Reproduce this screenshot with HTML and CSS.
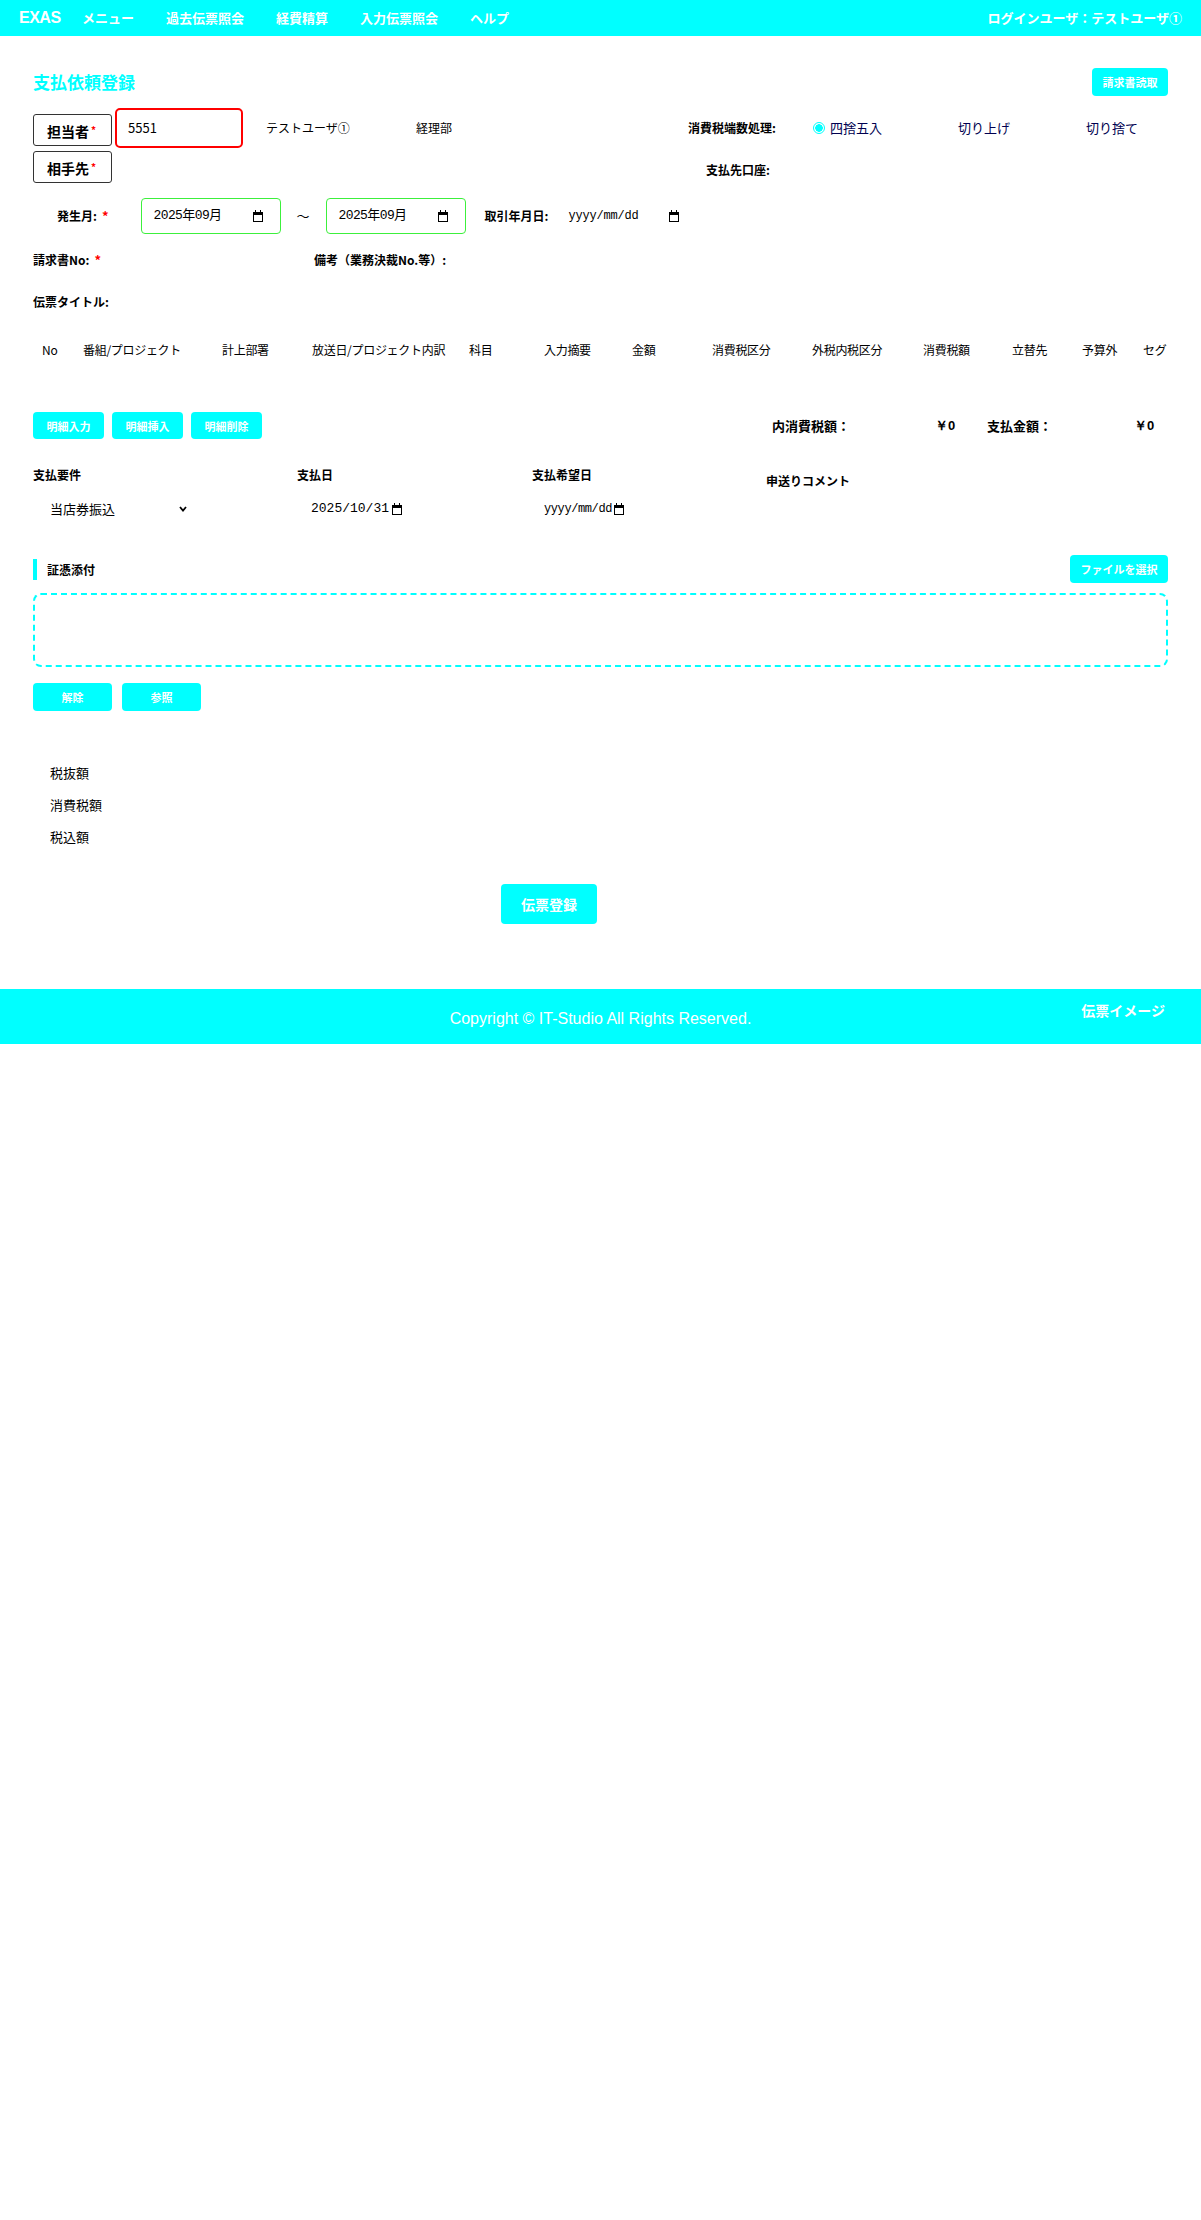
FILE: index.html
```html
<!DOCTYPE html>
<html lang="ja">
<head>
<meta charset="utf-8">
<title>支払依頼登録</title>
<link rel="stylesheet" href="styles.css">
</head>
<body>
<header class="topbar">
  <div class="brand">EXAS</div>
  <nav class="nav">
    <span class="nav-item">メニュー</span>
    <span class="nav-item">過去伝票照会</span>
    <span class="nav-item">経費精算</span>
    <span class="nav-item">入力伝票照会</span>
    <span class="nav-item">ヘルプ</span>
  </nav>
  <div class="login">ログインユーザ：テストユーザ①</div>
</header>

<main class="main">
  <div class="title-row">
    <h1 class="page-title">支払依頼登録</h1>
    <button class="btn btn-read">請求書読取</button>
  </div>

  <div class="row1">
    <div class="left1">
      <div class="tag-box">担当者<span class="req-sm">*</span></div>
      <div class="code-input">5551</div>
      <span class="user-name">テストユーザ①</span>
      <span class="dept">経理部</span>
    </div>
    <div class="right1">
      <span class="lbl-bold lbl-round">消費税端数処理:</span>
      <div class="radio-opt"><span class="radio checked"></span><span class="radio-text">四捨五入</span></div>
      <div class="radio-opt"><span class="radio"></span><span class="radio-text">切り上げ</span></div>
      <div class="radio-opt last"><span class="radio"></span><span class="radio-text">切り捨て</span></div>
    </div>
  </div>

  <div class="row2">
    <div class="left2">
      <div class="tag-box">相手先<span class="req-sm">*</span></div>
    </div>
    <div class="right2">
      <span class="lbl-bold">支払先口座:</span>
    </div>
  </div>

  <div class="row3">
    <span class="lbl-bold lbl-hassei">発生月:</span><span class="req">*</span>
    <div class="month-input first"><span class="date-text">2025年09月</span><svg class="cal" width="10" height="12" viewBox="0 0 10 12"><rect x="0.5" y="2.5" width="9" height="9" fill="none" stroke="#000"/><rect x="0" y="2" width="10" height="3" fill="#000"/><rect x="2" y="0" width="1" height="3" fill="#000"/><rect x="7" y="0" width="1" height="3" fill="#000"/></svg></div>
    <span class="tilde">～</span>
    <div class="month-input second"><span class="date-text">2025年09月</span><svg class="cal" width="10" height="12" viewBox="0 0 10 12"><rect x="0.5" y="2.5" width="9" height="9" fill="none" stroke="#000"/><rect x="0" y="2" width="10" height="3" fill="#000"/><rect x="2" y="0" width="1" height="3" fill="#000"/><rect x="7" y="0" width="1" height="3" fill="#000"/></svg></div>
    <span class="lbl-bold lbl-torihiki">取引年月日:</span>
    <div class="plain-date wide"><span class="date-ph">yyyy/mm/dd</span><svg class="cal" width="10" height="12" viewBox="0 0 10 12"><rect x="0.5" y="2.5" width="9" height="9" fill="none" stroke="#000"/><rect x="0" y="2" width="10" height="3" fill="#000"/><rect x="2" y="0" width="1" height="3" fill="#000"/><rect x="7" y="0" width="1" height="3" fill="#000"/></svg></div>
  </div>

  <div class="row4">
    <div class="cell-seikyu"><span class="lbl-bold">請求書No:</span><span class="req">*</span></div>
    <span class="lbl-bold">備考（業務決裁No.等）:</span>
  </div>

  <div class="row5">
    <span class="lbl-bold">伝票タイトル:</span>
  </div>

  <div class="grid-head">
    <div class="th">No</div>
    <div class="th">番組/プロジェクト</div>
    <div class="th">計上部署</div>
    <div class="th">放送日/プロジェクト内訳</div>
    <div class="th">科目</div>
    <div class="th">入力摘要</div>
    <div class="th">金額</div>
    <div class="th">消費税区分</div>
    <div class="th">外税内税区分</div>
    <div class="th">消費税額</div>
    <div class="th">立替先</div>
    <div class="th">予算外</div>
    <div class="th">セグ</div>
  </div>

  <div class="btn-row">
    <div class="btn-group">
      <button class="btn btn-small">明細入力</button>
      <button class="btn btn-small">明細挿入</button>
      <button class="btn btn-small">明細削除</button>
    </div>
    <div class="totals">
      <span class="total-label">内消費税額：</span>
      <span class="total-val">￥0</span>
      <span class="total-label total-label2">支払金額：</span>
      <span class="total-val total-val2">￥0</span>
    </div>
  </div>

  <div class="pay-grid">
    <div class="pay-label">支払要件</div>
    <div class="pay-label">支払日</div>
    <div class="pay-label">支払希望日</div>
    <div class="pay-label pay-label-comment">申送りコメント</div>
    <div class="select-fake"><span>当店券振込</span><svg class="chev" width="8" height="6" viewBox="0 0 8 6"><polyline points="1,1 4,4.5 7,1" fill="none" stroke="#000" stroke-width="1.8"/></svg></div>
    <div class="plain-date"><span class="date-text2">2025/10/31</span><svg class="cal" width="10" height="12" viewBox="0 0 10 12"><rect x="0.5" y="2.5" width="9" height="9" fill="none" stroke="#000"/><rect x="0" y="2" width="10" height="3" fill="#000"/><rect x="2" y="0" width="1" height="3" fill="#000"/><rect x="7" y="0" width="1" height="3" fill="#000"/></svg></div>
    <div class="plain-date"><span class="date-ph2">yyyy/mm/dd</span><svg class="cal" width="10" height="12" viewBox="0 0 10 12"><rect x="0.5" y="2.5" width="9" height="9" fill="none" stroke="#000"/><rect x="0" y="2" width="10" height="3" fill="#000"/><rect x="2" y="0" width="1" height="3" fill="#000"/><rect x="7" y="0" width="1" height="3" fill="#000"/></svg></div>
    <div></div>
  </div>

  <div class="evi-head">
    <div class="evi-title">証憑添付</div>
    <button class="btn btn-file">ファイルを選択</button>
  </div>
  <div class="dropzone"></div>
  <div class="evi-btns">
    <button class="btn btn-evi">解除</button>
    <button class="btn btn-evi">参照</button>
  </div>

  <div class="summary">
    <div class="sum-item">税抜額</div>
    <div class="sum-item">消費税額</div>
    <div class="sum-item">税込額</div>
  </div>

  <div class="submit-row">
    <button class="btn btn-submit">伝票登録</button>
  </div>
</main>

<footer class="footer">
  <div></div>
  <div class="copyright">Copyright © IT-Studio All Rights Reserved.</div>
  <div class="footer-link">伝票イメージ</div>
</footer>
</body>
</html>
```

FILE: styles.css
```css
* { box-sizing: border-box; }

body {
  margin: 0;
  background: #fff;
  color: #000;
  font-family: "Noto Sans CJK JP", "Noto Sans", sans-serif;
  font-size: 12px;
  line-height: 20px;
}

.topbar {
  height: 36px;
  background: #00ffff;
  display: flex;
  align-items: center;
  padding: 0 19px 0 19px;
  color: #fff;
}
.brand {
  font-family: "Liberation Sans", Arial, sans-serif;
  font-weight: bold;
  font-size: 16px;
  letter-spacing: -0.5px;
  width: 63px;
}
.nav {
  display: flex;
  gap: 32px;
}
.nav-item {
  font-size: 13px;
  font-weight: bold;
}
.login {
  margin-left: auto;
  font-size: 13px;
  font-weight: bold;
}

.main {
  padding: 0 33px;
}

.title-row {
  margin-top: 32px;
  height: 28px;
  display: flex;
  align-items: center;
  justify-content: space-between;
}
.page-title {
  margin: 0;
  font-size: 17px;
  font-weight: bold;
  color: #00ffff;
  line-height: 28px;
}

.btn {
  background: #00ffff;
  color: #fff;
  border: none;
  border-radius: 4px;
  font-family: "Noto Sans CJK JP", sans-serif;
  font-weight: bold;
  padding: 0;
  cursor: pointer;
}
.btn-read {
  width: 76px;
  height: 28px;
  font-size: 11px;
}

.row1 {
  margin-top: 12px;
  height: 40px;
  display: flex;
}
.left1 {
  flex: none;
  width: 655px;
  display: flex;
  align-items: flex-start;
}
.tag-box {
  width: 79px;
  height: 32px;
  margin-top: 6px;
  border: 1px solid #333;
  border-radius: 3px;
  font-size: 14px;
  font-weight: bold;
  line-height: 30px;
  padding-left: 13px;
}
.row2 .tag-box { margin-top: 0; }
.req-sm {
  color: #f00;
  font-size: 10px;
  vertical-align: 3px;
  margin-left: 2px;
}
.code-input {
  margin-left: 3px;
  width: 128px;
  height: 40px;
  border: 2px solid #f00;
  border-radius: 5px;
  font-size: 13px;
  line-height: 36px;
  padding-left: 11px;
}
.user-name {
  margin-left: 23px;
  width: 150px;
  line-height: 40px;
}
.dept {
  line-height: 40px;
}
.right1 {
  flex: none;
  display: flex;
  align-items: center;
}
.lbl-bold {
  font-weight: bold;
  font-size: 12px;
}
.lbl-round {
  width: 125px;
}
.radio-opt {
  width: 128px;
  display: flex;
  align-items: center;
}
.radio-opt.last { width: auto; }
.radio {
  width: 12px;
  height: 12px;
  border-radius: 50%;
  margin-right: 5px;
  flex: none;
}
.radio.checked {
  border: 1.5px solid #00ffff;
  background: radial-gradient(circle, #00ffff 0 3.5px, #fff 4px);
}
.radio-text {
  font-size: 13px;
  color: #000050;
}

.row2 {
  margin-top: 3px;
  height: 32px;
  display: flex;
}
.left2 {
  flex: none;
  width: 673px;
}
.right2 {
  padding-top: 9px;
}

.row3 {
  margin-top: 15px;
  height: 36px;
  display: flex;
  align-items: center;
}
.lbl-hassei {
  margin-left: 24px;
}
.req {
  color: #f00;
  font-weight: bold;
  font-size: 13px;
  margin-left: 5px;
}
.month-input {
  width: 140px;
  height: 36px;
  border: 1px solid #3cf03c;
  border-radius: 4px;
  display: flex;
  align-items: center;
  padding-left: 12px;
}
.month-input.first { margin-left: 32px; }
.month-input.second { margin-left: 16px; }
.date-text {
  font-family: "Liberation Mono", "Noto Sans CJK JP", monospace;
  font-size: 13px;
  width: 99px;
  letter-spacing: -0.6px;
}
.tilde {
  margin-left: 16px;
  font-size: 13px;
}
.lbl-torihiki {
  margin-left: 19px;
}
.plain-date {
  display: flex;
  align-items: center;
}
.plain-date.wide {
  margin-left: 20px;
}
.date-ph {
  font-family: "Liberation Mono", monospace;
  font-size: 12px;
  width: 101px;
  letter-spacing: -0.2px;
}
.cal { display: block; flex: none; }

.row4 {
  margin-top: 16px;
  height: 20px;
  display: flex;
  align-items: center;
}
.cell-seikyu {
  width: 281px;
}
.row5 {
  margin-top: 22px;
  height: 20px;
}

.grid-head {
  margin-top: 23px;
  height: 30px;
  display: grid;
  grid-template-columns: 41px 139px 90px 157px 75px 88px 80px 100px 111px 89px 70px 61px 1fr;
  line-height: 30px;
}
.th {
  padding-left: 9px;
  white-space: nowrap;
  font-size: 12px;
  letter-spacing: -0.3px;
}

.btn-row {
  margin-top: 47px;
  height: 27px;
  display: flex;
  align-items: center;
}
.btn-group {
  flex: 1;
  display: flex;
  gap: 8px;
}
.btn-small {
  width: 71px;
  height: 27px;
  font-size: 11px;
}
.totals {
  flex: none;
  display: flex;
  align-items: center;
  font-weight: bold;
  font-size: 13px;
}
.total-label { flex: none; width: 163px; }
.total-val { flex: none; width: 52px; font-family: "Liberation Sans", sans-serif; }
.total-label2 { width: 147px; }
.total-val2 { width: 34px; }

.pay-grid {
  margin-top: 26px;
  display: grid;
  grid-template-columns: 264px 235px 234px 1fr;
  grid-template-rows: 20px 24px;
  row-gap: 12px;
}
.pay-label {
  font-weight: bold;
  font-size: 12px;
}
.pay-label-comment {
  padding-top: 6px;
}
.select-fake {
  width: 154px;
  display: flex;
  align-items: center;
  justify-content: space-between;
  padding-left: 17px;
  font-size: 13px;
}
.chev { display: block; }
.date-text2 {
  font-family: "Liberation Mono", monospace;
  font-size: 13px;
  margin-left: 14px;
  margin-right: 3px;
}
.date-ph2 {
  font-family: "Liberation Mono", monospace;
  font-size: 12px;
  margin-left: 12px;
  margin-right: 2px;
  letter-spacing: -0.4px;
}

.evi-head {
  margin-top: 34px;
  height: 28px;
  display: flex;
  align-items: center;
  justify-content: space-between;
}
.evi-title {
  border-left: 4px solid #00ffff;
  padding-left: 10px;
  height: 21px;
  line-height: 21px;
  font-weight: bold;
  font-size: 12px;
}
.btn-file {
  width: 98px;
  height: 28px;
  font-size: 11px;
}
.dropzone {
  margin-top: 10px;
  height: 74px;
  border: 2px dashed #00ffff;
  border-radius: 8px;
}
.evi-btns {
  margin-top: 16px;
  display: flex;
  gap: 10px;
}
.btn-evi {
  width: 79px;
  height: 28px;
  font-size: 11px;
}

.summary {
  margin-top: 52px;
  padding-left: 17px;
  display: flex;
  flex-direction: column;
  gap: 12px;
}
.sum-item {
  font-size: 13px;
  line-height: 20px;
}

.submit-row {
  margin-top: 37px;
  padding-left: 468px;
}
.btn-submit {
  width: 96px;
  height: 40px;
  font-size: 14px;
}

.footer {
  margin-top: 65px;
  height: 55px;
  background: #00ffff;
  color: #fff;
  display: grid;
  grid-template-columns: 1fr auto 1fr;
}
.copyright {
  font-family: "Liberation Sans", Arial, sans-serif;
  font-size: 16px;
  line-height: 55px;
  padding-top: 2px;
}
.footer-link {
  justify-self: end;
  padding-right: 36px;
  padding-top: 11px;
  font-size: 14px;
  font-weight: bold;
}
```
